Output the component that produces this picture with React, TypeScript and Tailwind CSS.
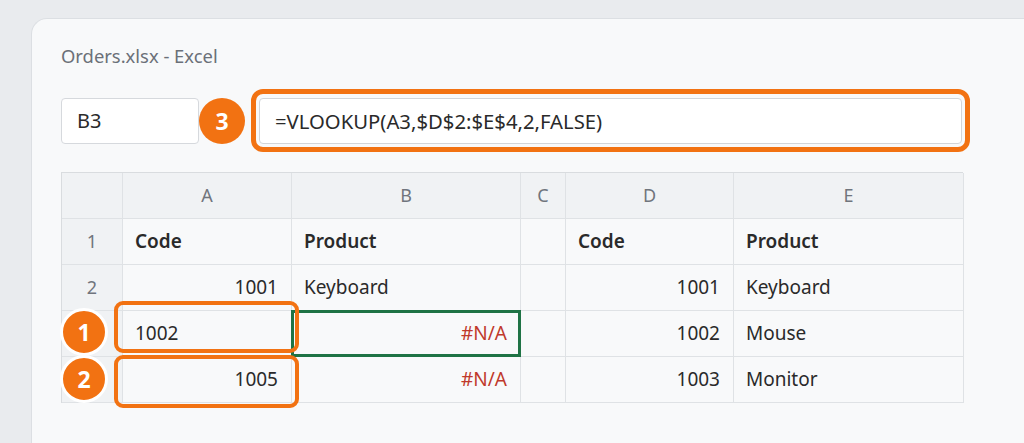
import React from "react";

const ORANGE = "border-[#f27212]";

function Badge({ n, ring }: { n: string; ring?: boolean }) {
  return (
    <div
      className={
        "flex items-center justify-center rounded-full bg-[#f27212] text-white font-bold text-[23px] leading-none " +
        (ring ? "w-[48px] h-[48px] border-[3px] border-white" : "w-[46px] h-[46px]")
      }
    >
      {n}
    </div>
  );
}

type Cell = { t?: string; align?: "l" | "r" | "c"; bold?: boolean; hdr?: boolean; red?: boolean; sel?: boolean };

const rows: Cell[][] = [
  [
    { hdr: true },
    { t: "A", hdr: true, align: "c" },
    { t: "B", hdr: true, align: "c" },
    { t: "C", hdr: true, align: "c" },
    { t: "D", hdr: true, align: "c" },
    { t: "E", hdr: true, align: "c" },
  ],
  [
    { t: "1", hdr: true, align: "c" },
    { t: "Code", bold: true },
    { t: "Product", bold: true },
    {},
    { t: "Code", bold: true },
    { t: "Product", bold: true },
  ],
  [
    { t: "2", hdr: true, align: "c" },
    { t: "1001", align: "r" },
    { t: "Keyboard" },
    {},
    { t: "1001", align: "r" },
    { t: "Keyboard" },
  ],
  [
    { hdr: true, align: "c" },
    { t: "1002" },
    { t: "#N/A", align: "r", red: true, sel: true },
    {},
    { t: "1002", align: "r" },
    { t: "Mouse" },
  ],
  [
    { hdr: true, align: "c" },
    { t: "1005", align: "r" },
    { t: "#N/A", align: "r", red: true },
    {},
    { t: "1003", align: "r" },
    { t: "Monitor" },
  ],
];

export default function App() {
  return (
    <div
      className="w-[1024px] h-[443px] overflow-hidden bg-[#e9ebee] pl-[31px] pt-[18px]"
      style={{ fontFamily: '"Noto Sans", "Open Sans", sans-serif' }}
    >
      <div className="h-[440px] w-[1000px] rounded-tl-[16px] border-l border-t border-[#dcdfe3] bg-[#f8f9fa] pl-[29px] pt-[24px]">
        <div className="text-[18.4px] leading-[26px] text-[#6b7078]">Orders.xlsx - Excel</div>

        <div className="mt-[29px] flex items-center h-[46px]">
          <div className="w-[138px] h-[46px] rounded-[4px] border border-[#d6d9dd] bg-white flex items-center pl-[15px] text-[20px] text-[#2a2a2a]">
            B3
          </div>
          <Badge n="3" />
          <div className="relative ml-[14px] w-[703px] h-[46px]">
            <div className="absolute -left-[8px] -right-[8px] -top-[9px] -bottom-[8px] rounded-[12px] border-[5px] border-[#f27212]" />
            <div className="w-full h-full rounded-[4px] border border-[#d2d5d9] bg-white flex items-center pl-[15px] text-[20.3px] text-[#2a2a2a]">
              =VLOOKUP(A3,$D$2:$E$4,2,FALSE)
            </div>
          </div>
        </div>

        <div className="relative mt-[28px] w-[902px]">
          <div className="grid grid-cols-[61px_169px_229px_45px_168px_230px] border-l border-t border-[#d9dcdf]">
            {rows.map((r, ri) =>
              r.map((c, ci) => {
                const isHdr = c.hdr;
                const align =
                  c.align === "r" ? "justify-end pr-[13px]" : c.align === "c" ? "justify-center" : "justify-start pl-[12px]";
                return (
                  <div
                    key={ri + "-" + ci}
                    className={
                      "relative h-[46px] flex items-center border-r border-b border-[#dfe2e5] " +
                      align +
                      " " +
                      (isHdr ? "bg-[#f0f2f4] text-[#70757d] text-[18px]" : "bg-[#f8f9fa] text-[#2a2a2a] text-[19px]") +
                      (c.bold ? " font-semibold text-[#1f1f1f]" : "") +
                      (c.red ? " text-[#c0392b]" : "")
                    }
                  >
                    {c.sel && (
                      <div className="absolute -left-[1px] -top-[1px] -right-[1px] -bottom-[1px] border-[3px] border-[#1f7345]" />
                    )}
                    <span className="relative">{c.t}</span>
                  </div>
                );
              })
            )}
          </div>

          <div className={"absolute left-[53px] top-[129px] w-[185px] h-[52px] rounded-[9px] border-[4px] " + ORANGE} />
          <div className={"absolute left-[53px] top-[183px] w-[185px] h-[53px] rounded-[9px] border-[4px] " + ORANGE} />
          <div className="absolute -left-[1px] top-[136px]">
            <Badge n="1" ring />
          </div>
          <div className="absolute -left-[1px] top-[183px]">
            <Badge n="2" ring />
          </div>
        </div>
      </div>
    </div>
  );
}
